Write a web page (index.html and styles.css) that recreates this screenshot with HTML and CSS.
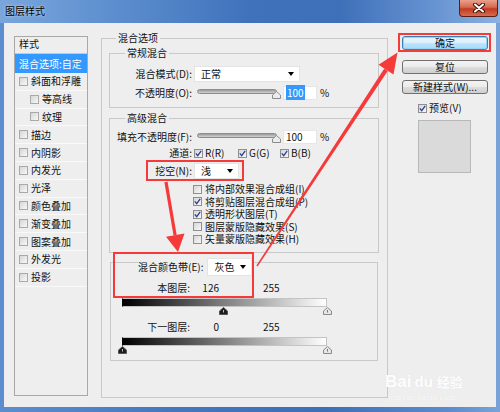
FILE: index.html
```html
<!DOCTYPE html>
<html lang="zh">
<head>
<meta charset="utf-8">
<title>图层样式</title>
<link rel="stylesheet" href="styles.css">
</head>
<body>
<div class="window">
  <div class="titlebar">
    <span class="title">图层样式</span>
    <span class="close">
      <svg width="14" height="10" viewBox="0 0 14 10"><path d="M3 1.5 L11 8.5 M11 1.5 L3 8.5" stroke="#3a1008" stroke-width="4" stroke-linecap="round"/><path d="M3 1.5 L11 8.5 M11 1.5 L3 8.5" stroke="#fff" stroke-width="2" stroke-linecap="round"/></svg>
    </span>
  </div>
  <div class="dialog">
    <div class="styles-list">
      <div class="list-head">样式</div>
      <div class="list-sel">混合选项:自定</div>
      <div class="list-item"><span class="cb"></span>斜面和浮雕</div>
      <div class="list-item sub"><span class="cb"></span>等高线</div>
      <div class="list-item sub"><span class="cb"></span>纹理</div>
      <div class="list-item"><span class="cb"></span>描边</div>
      <div class="list-item"><span class="cb"></span>内阴影</div>
      <div class="list-item"><span class="cb"></span>内发光</div>
      <div class="list-item"><span class="cb"></span>光泽</div>
      <div class="list-item"><span class="cb"></span>颜色叠加</div>
      <div class="list-item"><span class="cb"></span>渐变叠加</div>
      <div class="list-item"><span class="cb"></span>图案叠加</div>
      <div class="list-item"><span class="cb"></span>外发光</div>
      <div class="list-item"><span class="cb"></span>投影</div>
    </div>

    <fieldset class="main">
      <legend>混合选项</legend>
      <fieldset class="group normal">
        <legend>常规混合</legend>
        <div class="row r-select">
          <span class="lbl">混合模式(D):</span>
          <div class="select wide">正常<span class="caret"></span></div>
        </div>
        <div class="row r-slider">
          <span class="lbl">不透明度(O):</span>
          <div class="slider"><span class="track"></span><span class="thumb"><svg width="9" height="8" viewBox="0 0 9 8"><path d="M4.5 0.5 L8.5 4 L8.5 7.5 L0.5 7.5 L0.5 4 Z" fill="#ececec" stroke="#8c8c8c"/></svg></span></div>
          <div class="num"><span class="hl">100</span></div>
          <span class="pct">%</span>
        </div>
      </fieldset>

      <fieldset class="group adv">
        <legend>高级混合</legend>
        <div class="row r-slider first">
          <span class="lbl">填充不透明度(F):</span>
          <div class="slider"><span class="track"></span><span class="thumb"><svg width="9" height="8" viewBox="0 0 9 8"><path d="M4.5 0.5 L8.5 4 L8.5 7.5 L0.5 7.5 L0.5 4 Z" fill="#ececec" stroke="#8c8c8c"/></svg></span></div>
          <div class="num">100</div>
          <span class="pct">%</span>
        </div>
        <div class="row r-chan">
          <span class="lbl">通道:</span>
          <span class="chan c-r"><span class="cb on"><svg width="7" height="7" viewBox="0 0 7 7"><path d="M0.8 3.4 L2.7 5.6 L6.2 0.8" stroke="#2b3f96" stroke-width="1.3" fill="none"/></svg></span>R(R)</span>
          <span class="chan c-g"><span class="cb on"><svg width="7" height="7" viewBox="0 0 7 7"><path d="M0.8 3.4 L2.7 5.6 L6.2 0.8" stroke="#2b3f96" stroke-width="1.3" fill="none"/></svg></span>G(G)</span>
          <span class="chan"><span class="cb on"><svg width="7" height="7" viewBox="0 0 7 7"><path d="M0.8 3.4 L2.7 5.6 L6.2 0.8" stroke="#2b3f96" stroke-width="1.3" fill="none"/></svg></span>B(B)</span>
        </div>
        <div class="row r-knock">
          <span class="lbl">挖空(N):</span>
          <div class="select narrow">浅<span class="caret"></span></div>
        </div>
        <div class="checks">
          <div class="check"><span class="cb"></span>将内部效果混合成组(I)</div>
          <div class="check"><span class="cb on"><svg width="7" height="7" viewBox="0 0 7 7"><path d="M0.8 3.4 L2.7 5.6 L6.2 0.8" stroke="#2b3f96" stroke-width="1.3" fill="none"/></svg></span>将剪贴图层混合成组(P)</div>
          <div class="check"><span class="cb on"><svg width="7" height="7" viewBox="0 0 7 7"><path d="M0.8 3.4 L2.7 5.6 L6.2 0.8" stroke="#2b3f96" stroke-width="1.3" fill="none"/></svg></span>透明形状图层(T)</div>
          <div class="check"><span class="cb"></span>图层蒙版隐藏效果(S)</div>
          <div class="check"><span class="cb"></span>矢量蒙版隐藏效果(H)</div>
        </div>
      </fieldset>

      <fieldset class="band">
        <legend><span class="band-head"><span>混合颜色带(E):</span><span class="select gray">灰色<span class="caret"></span></span></span></legend>
        <div class="brow">
          <span class="blabel">本图层:</span>
          <span class="v1">126</span>
          <span class="v2">255</span>
        </div>
        <div class="grad"></div>
        <div class="markers">
          <span class="mk" style="left:49.4%"><svg width="9" height="8" viewBox="0 0 9 8"><path d="M4.5 0.5 L8.5 4 L8.5 7.5 L0.5 7.5 L0.5 4 Z" fill="#1d1d1d" stroke="#555"/><path d="M4.5 3 L4.5 5.5" stroke="#bbb" stroke-width="1"/></svg></span>
          <span class="mk" style="left:100%"><svg width="9" height="8" viewBox="0 0 9 8"><path d="M4.5 0.5 L8.5 4 L8.5 7.5 L0.5 7.5 L0.5 4 Z" fill="#e6e6e6" stroke="#8a8a8a"/><path d="M4.5 3 L4.5 5.5" stroke="#777" stroke-width="1"/></svg></span>
        </div>
        <div class="brow second">
          <span class="blabel">下一图层:</span>
          <span class="v1">0</span>
          <span class="v2">255</span>
        </div>
        <div class="grad"></div>
        <div class="markers">
          <span class="mk" style="left:0%"><svg width="9" height="8" viewBox="0 0 9 8"><path d="M4.5 0.5 L8.5 4 L8.5 7.5 L0.5 7.5 L0.5 4 Z" fill="#1d1d1d" stroke="#555"/><path d="M4.5 3 L4.5 5.5" stroke="#bbb" stroke-width="1"/></svg></span>
          <span class="mk" style="left:100%"><svg width="9" height="8" viewBox="0 0 9 8"><path d="M4.5 0.5 L8.5 4 L8.5 7.5 L0.5 7.5 L0.5 4 Z" fill="#e6e6e6" stroke="#8a8a8a"/><path d="M4.5 3 L4.5 5.5" stroke="#777" stroke-width="1"/></svg></span>
        </div>
      </fieldset>
    </fieldset>

    <div class="side">
      <div class="btn default">确定</div>
      <div class="btn reset">复位</div>
      <div class="btn newstyle">新建样式(W)...</div>
      <div class="preview-row"><span class="cb on"><svg width="7" height="7" viewBox="0 0 7 7"><path d="M0.8 3.4 L2.7 5.6 L6.2 0.8" stroke="#2b3f96" stroke-width="1.3" fill="none"/></svg></span>预览(V)</div>
      <div class="preview-box"></div>
    </div>
  </div>

  <svg class="annot" width="500" height="412" viewBox="0 0 500 412">
    <g fill="none" stroke="#f53a3a" stroke-width="2">
      <rect x="147" y="161" width="96" height="19"/>
      <rect x="114" y="253" width="139" height="44"/>
      <rect x="399" y="34" width="91" height="17"/>
    </g>
    <g fill="#f53a3a">
      <polygon points="387.7,71.1 384.3,68.6 256.4,265.6 257.6,266.4"/>
      <polygon points="397.5,52.5 393.5,74.6 378.5,64.8"/>
      <polygon points="167.6,181.7 164.4,182.3 173.5,235.5 176.7,234.9"/>
      <polygon points="178,252 184.5,233.6 166,236.8"/>
    </g>
  </svg>
  <div class="watermark"><span class="wm-bai">Bai</span><span class="wm-du">du</span><span class="wm-jy">经验</span><div class="wm-url">jingyan.baidu.com</div></div>
</div>
</body>
</html>
```

FILE: styles.css
```css
* { box-sizing: border-box; }
html, body { margin: 0; padding: 0; }
body {
  width: 500px;
  height: 412px;
  overflow: hidden;
  font-family: "Noto Sans CJK SC", "Liberation Sans", sans-serif;
  font-size: 10px;
  line-height: 12px;
  color: #111;
}
.window {
  position: relative;
  width: 500px;
  height: 412px;
  display: flex;
  flex-direction: column;
  background: linear-gradient(90deg, #5b8dcf 0%, #4577bf 35%, #3d6fb8 65%, #5c8ccd 90%, #7aa4d9 100%);
}
.titlebar {
  height: 23px;
  display: flex;
  align-items: flex-start;
  flex: none;
  background: linear-gradient(90deg, #7aa6dc 0%, #5d8fcf 22%, #3f72bb 50%, #3e70b9 68%, #6995d3 88%, #8cb2e2 100%);
}
.title {
  margin: 5px 0 0 5px;
  color: #000;
  text-shadow: 0 0 3px rgba(255, 255, 255, 0.8);
}
.close {
  margin-left: auto;
  margin-right: 2px;
  width: 39px;
  height: 17px;
  border: 1px solid #5a2014;
  border-top: none;
  border-radius: 0 0 4px 4px;
  background: linear-gradient(#e8a08c, #d66a50 45%, #c23b21 55%, #d86c4e 100%);
  display: flex;
  align-items: center;
  justify-content: center;
}
.dialog {
  flex: 1;
  margin: 0 4px 5px;
  background: #eeeeee;
  display: flex;
  align-items: flex-start;
  padding: 13px 0 0 10px;
}

/* left styles list */
.styles-list {
  flex: none;
  width: 74px;
  height: 360px;
  border: 1px solid #a8a8a8;
}
.list-head {
  height: 17px;
  padding: 1px 0 0 4px;
  border-bottom: 1px solid #c9c9c9;
}
.list-sel {
  height: 19px;
  padding: 4px 0 0 4px;
  background: #3399ff;
  color: #fff;
}
.list-item {
  height: 17.8px;
  display: flex;
  align-items: center;
  padding-left: 4px;
  border-bottom: 1px solid #f9f9f9;
}
.list-item.sub { padding-left: 15px; }
.list-item .cb { margin-right: 3px; border-color: #a9a9a9; }

/* checkbox */
.cb {
  flex: none;
  width: 9px;
  height: 9px;
  border: 1px solid #8f8f8f;
  background: linear-gradient(135deg, #d6d6d6, #f8f8f8);
  display: inline-flex;
  align-items: center;
  justify-content: center;
}
.cb svg { display: block; }

/* fieldsets */
fieldset {
  margin: 0;
  min-width: 0;
  border: 1px solid #c9c9c9;
}
legend {
  margin-left: 7px;
  padding: 0 2px;
  line-height: 12px;
}
.main {
  flex: none;
  width: 287px;
  margin: -4px 0 0 13px;
  padding: 3px 8px 36px 7px;
}
.group { padding: 7px 8px 7px; }
.adv { margin-top: 4px; padding: 6px 8px 6px; }

.row { display: flex; align-items: center; }
.lbl {
  flex: none;
  width: 74px;
  display: flex;
  justify-content: flex-end;
  white-space: nowrap;
}
.r-select { height: 16px; }
.r-slider { height: 14px; margin-top: 4px; }
.r-slider.first { margin-top: 0; }
.r-chan { height: 12px; margin-top: 3px; }
.r-knock { height: 16px; margin-top: 4px; }

.select {
  height: 16px;
  margin-left: 2px;
  background: #fff;
  border: 1px solid #e4e4e4;
  display: flex;
  align-items: center;
  padding-left: 6px;
}
.select.wide { width: 106px; }
.select.narrow { width: 45px; }
.caret {
  margin-left: auto;
  margin-right: 5px;
  width: 0;
  height: 0;
  border-left: 3px solid transparent;
  border-right: 3px solid transparent;
  border-top: 4px solid #000;
}

.slider {
  position: relative;
  flex: none;
  width: 80px;
  height: 14px;
  margin-left: 5px;
}
.track {
  display: block;
  margin-top: 3px;
  height: 5px;
  border-radius: 3px;
  border: 1px solid #8d8d8d;
  background: linear-gradient(#9a9a9a, #d2d2d2);
}
.thumb {
  position: absolute;
  left: 75px;
  top: 5px;
  width: 9px;
  height: 8px;
}
.thumb svg { display: block; }
.num {
  flex: none;
  width: 34px;
  height: 14px;
  margin-left: 6px;
  background: #fff;
  border: 1px solid #e6e6e6;
  padding-left: 2px;
  line-height: 12px;
}
.hl { background: #3399ff; color: #fff; padding: 0 1px; }
.pct { margin-left: 3px; }

.chan { display: flex; align-items: center; flex: none; margin-left: 0; }
.chan .cb { margin-right: 2px; }
.c-r { width: 44px; margin-left: 2px; }
.c-g { width: 42px; }

.checks { margin-top: 4px; padding-left: 75px; }
.check { height: 12.5px; display: flex; align-items: center; white-space: nowrap; }
.check .cb { margin-right: 3px; }

/* blend band */
.band {
  margin: -3px 1px 0;
  padding: 6px 0 6px 11px;
}
.band legend { margin-left: 16px; padding: 8px 0 0; }
.band-head { display: flex; align-items: center; }
.select.gray { width: 45px; height: 18px; margin-left: 4px; }
.brow { display: flex; height: 12px; align-items: center; }
.brow.second { margin-top: 6px; }
.blabel { width: 68px; display: flex; justify-content: flex-end; flex: none; white-space: nowrap; }
.v1 { width: 29px; text-align: right; flex: none; }
.v2 { margin-left: 44px; }
.grad {
  width: 205px;
  height: 9px;
  margin-top: 4px;
  border: 1px solid #c4c4c4;
  border-left-color: #000;
  background: linear-gradient(90deg, #000, #fff);
}
.markers { position: relative; width: 205px; height: 8px; }
.mk { position: absolute; top: 0; width: 9px; height: 8px; margin-left: -4.5px; }
.mk svg { display: block; }

/* right side */
.side {
  flex: none;
  width: 86px;
  margin-left: 14px;
  display: flex;
  flex-direction: column;
}
.btn {
  height: 14px;
  border: 1px solid #707070;
  border-radius: 3px;
  background: linear-gradient(#f3f3f3, #ebebeb 50%, #dddddd 51%, #cfcfcf);
  display: flex;
  align-items: center;
  justify-content: center;
  color: #111;
}
.btn.default {
  border-color: #3c7fb1;
  background: linear-gradient(#eaf6fd, #d9f0fc 50%, #bee6fd 51%, #a7d9f5);
  box-shadow: inset 0 0 0 1px #8fd6f6;
}
.btn.reset { margin-top: 10px; }
.btn.newstyle { margin-top: 6px; }
.preview-row {
  margin-top: 8px;
  height: 12px;
  display: flex;
  align-items: center;
  padding-left: 16px;
}
.preview-row .cb { margin-right: 2px; }
.preview-box {
  margin: 6px 0 0 16px;
  width: 53px;
  height: 53px;
  border: 1px solid #b8b8b8;
  background: #dadada;
}

/* annotations */
.annot { position: absolute; left: 0; top: 0; pointer-events: none; }
.watermark {
  position: absolute;
  left: 385px;
  top: 372px;
  color: rgba(255, 255, 255, 0.95);
  text-shadow: 0 0 1px rgba(210, 210, 210, 0.45);
  font-family: "Liberation Sans", sans-serif;
  font-weight: bold;
  white-space: nowrap;
}
.wm-bai { font-size: 17px; line-height: 20px; }
.wm-du { font-size: 15px; margin-left: 3px; }
.wm-jy { font-family: "Noto Sans CJK SC", sans-serif; font-size: 13px; margin-left: 4px; }
.wm-url { font-family: "Liberation Serif", serif; font-weight: normal; font-size: 9px; line-height: 10px; margin-left: 3px; color: rgba(255, 255, 255, 0.8); }
```
